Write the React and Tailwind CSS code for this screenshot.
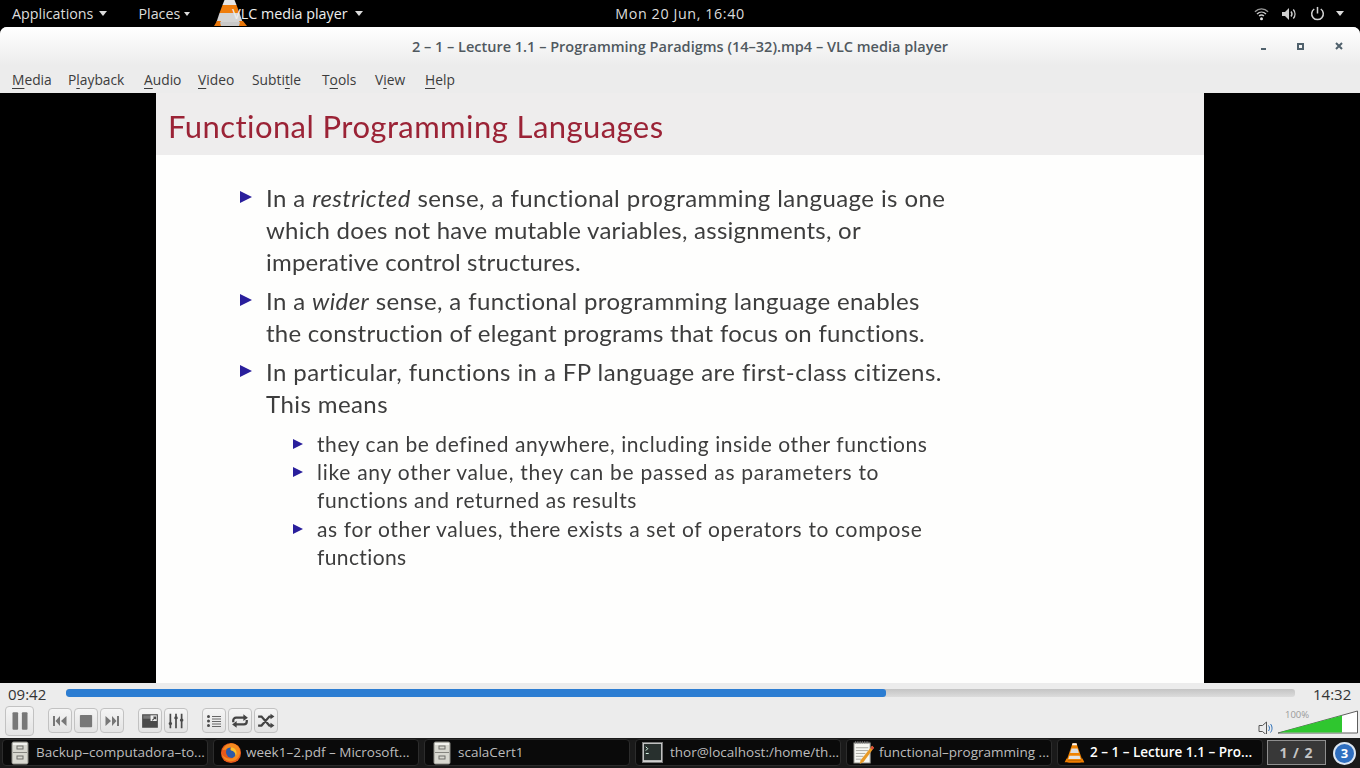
const ui = { fontFamily: '"Open Sans", "Noto Sans", sans-serif' };

function Cone({ className }) {
  return (
    <svg viewBox="0 0 32 32" className={className}>
      <path d="M13 1h6l9 26H4z" fill="#f08300" />
      <path d="M11.400 9h9.200l2 7H9.400z" fill="#dcdcdc" />
      <path d="M8.200 20h15.600l1.600 5H6.600z" fill="#e4e4e4" />
      <path d="M4 24l-3 6c0 1 30 1 30 0l-3-6-2 3H6z" fill="#ef7d00" />
      <path d="M13 1h6l1 3h-8z" fill="#f6f6f6" />
    </svg>
  );
}

function TopCone() {
  return (
    <svg viewBox="0 0 36 27" className="w-[36px] h-[27px] ml-[22px] shrink-0">
      <path d="M12.500 0h10l2 5h-14z" fill="#e6e6e6" />
      <path d="M10.500 5h14l3 8h-20z" fill="#ef7d0c" />
      <path d="M7.500 13h20l3 9h-26z" fill="#d4d4d4" />
      <path d="M5 21h4l-1 2h20l-1-2h4l4 5H2z" fill="#e8760a" />
      <path d="M8 22h20l-1 4H9z" fill="#c9c9c9" />
    </svg>
  );
}

function Cabinet() {
  return (
    <svg viewBox="0 0 18 24" className="w-[18px] h-[24px] shrink-0 ml-[2px]">
      <rect x="1" y="1" width="16" height="22" rx="1.500" fill="#d8d8d0" stroke="#8c8c86" />
      <path d="M2 11.500h14" stroke="#85857f" />
      <rect x="6" y="5" width="6" height="3" fill="none" stroke="#6f6f6a" />
      <rect x="6" y="15" width="6" height="3" fill="none" stroke="#6f6f6a" />
      <path d="M2 2h14v2H2z" fill="#f2f2ee" />
    </svg>
  );
}

function Firefox() {
  return (
    <svg viewBox="0 0 24 24" className="w-[22px] h-[22px] shrink-0 -mr-[3px]">
      <circle cx="12" cy="12" r="11" fill="#e8591a" />
      <circle cx="13" cy="11" r="6.500" fill="#2c5aa8" />
      <path d="M3 9c2-6 8-8 12-7 4 1 7 5 7 9 0 5-4 10-10 10C7 21 3 18 2 13c2 3 5 5 9 5 4 0 6-3 6-5 0-3-3-4-5-4-1 0-1-2 0-3-3 0-5 1-6 3-1-1-2 0-3 0z" fill="#f58a1f" />
      <path d="M12 6c3 0 6 2 6 6 0 1 0 2-1 3 0-3-2-5-5-6z" fill="#f9c22e" />
    </svg>
  );
}

function Term() {
  return (
    <svg viewBox="0 0 22 22" className="w-[21px] h-[21px] shrink-0">
      <rect x="0.500" y="0.500" width="21" height="21" fill="#cfcfcf" stroke="#777" />
      <rect x="2" y="2" width="18" height="17" fill="#28302e" />
      <path d="M4 5l2 2-2 2M4 12h3" stroke="#dfe" fill="none" />
    </svg>
  );
}

function Note() {
  return (
    <svg viewBox="0 0 22 26" className="w-[21px] h-[25px] shrink-0 -mr-[2px]">
      <rect x="1" y="3" width="17" height="21" fill="#f7f7f2" stroke="#8a8a84" />
      <path d="M2 2.500h15" stroke="#777" strokeWidth="2.400" strokeDasharray="1.400 1" />
      <path d="M3 8h13M3 11h13M3 14h10M3 17h8M3 20h6" stroke="#a8a8a2" />
      <path d="M20 6l2 2-11 15-4 2 1-4z" fill="#e89a26" />
      <path d="M20 6l2 2-1.600 2.200-2-2z" fill="#d94a3c" />
    </svg>
  );
}

function Btn({ wide, children }) {
  return (
    <div className={`${wide ? "w-[29px] h-[30px]" : "w-[24px] h-[25px]"} flex items-center justify-center rounded-[4px] border border-[#c2c2c2] bg-gradient-to-b from-[#f5f5f5] to-[#e3e3e3]`}>
      {children}
    </div>
  );
}

const I = ({ children, s = 16 }) => (
  <svg viewBox="0 0 16 16" style={{ width: s, height: s }} fill="#777777" stroke="none">{children}</svg>
);

const Mn = ({ children }) => <span className="underline underline-offset-[3px] decoration-1">{children}</span>;

function Caret({ className }) {
  return <span className={`inline-block w-0 h-0 border-x-[4.5px] border-x-transparent border-t-[5px] border-t-[#dcdcdc] ${className || ""}`} />;
}

function Main({ children }) {
  return (
    <div className="flex">
      <div className="w-[84px] h-[32px] relative shrink-0">
        <span className="absolute left-[84px] top-[9px] w-0 h-0 border-y-[6.5px] border-y-transparent border-l-[12px] border-l-[#2a1f9c]" />
      </div>
      <div className="pl-[26px] flex flex-col text-[24px] leading-[32px] whitespace-nowrap">{children}</div>
    </div>
  );
}

function Sub({ children }) {
  return (
    <div className="flex">
      <div className="w-[137px] h-[28px] relative shrink-0">
        <span className="absolute left-[137px] top-[9px] w-0 h-0 border-y-[5px] border-y-transparent border-l-[10px] border-l-[#2a1f9c]" />
      </div>
      <div className="pl-[24px] flex flex-col text-[21px] leading-[28px] whitespace-nowrap">{children}</div>
    </div>
  );
}

function Task({ icon, active, children }) {
  return (
    <div className={`w-[206px] h-[27px] shrink-0 flex items-center gap-[7px] px-[6px] rounded-[4px] border border-[#2c2c2c] bg-[#0a0a0a] text-[13.5px] whitespace-nowrap overflow-hidden ${active ? "text-white font-semibold" : "text-[#bdbdbd]"}`}>
      {icon}
      <span>{children}</span>
    </div>
  );
}

export default function App() {
  return (
    <div className="w-[1360px] h-[768px] overflow-hidden flex flex-col bg-black" style={ui}>
      {/* GNOME top bar */}
      <div className="h-[27px] shrink-0 bg-black text-[#dcdcdc] text-[14.3px] grid grid-cols-[1fr_auto_1fr] items-center overflow-hidden">
        <div className="flex items-center pl-[12px]">
          <span>Applications</span>
          <Caret className="ml-[6px]" />
          <span className="ml-[31px]">Places</span>
          <span className="ml-[4px] inline-block w-0 h-0 border-x-[3px] border-x-transparent border-t-[4px] border-t-[#dcdcdc]" />
          <TopCone />
          <span className="-ml-[16px] relative text-[#eeeeee]">VLC media player</span>
          <Caret className="ml-[7px]" />
        </div>
        <div className="font-medium tracking-[0.6px]">Mon 20 Jun, 16:40</div>
        <div className="flex items-center justify-end pr-[16px]">
          <svg viewBox="0 0 16 14" className="w-[15px] h-[14px]" fill="none" stroke="#cfcfcf" strokeWidth="1.500">
            <path d="M1 4.500c4-4 10-4 14 0" stroke="#999" />
            <path d="M3.200 7c2.800-2.700 6.800-2.700 9.600 0" />
            <path d="M5.400 9.200c1.500-1.400 3.700-1.400 5.200 0" />
            <circle cx="8" cy="12" r="1.600" fill="#e4e4e4" stroke="none" />
          </svg>
          <svg viewBox="0 0 16 14" className="w-[16px] h-[14px] ml-[12px]" fill="none" stroke="#cfcfcf" strokeWidth="1.400">
            <path d="M1 5h3l4-4v12L4 9H1z" fill="#cfcfcf" stroke="none" />
            <path d="M10 4.500c1.200 1.500 1.200 3.500 0 5M12.300 2.500c2.200 2.600 2.200 6.400 0 9" />
          </svg>
          <svg viewBox="0 0 16 16" className="w-[15px] h-[15px] ml-[13px]" fill="none" stroke="#d4d4d4" strokeWidth="1.600">
            <path d="M8 1v7" />
            <path d="M4.500 3.200a6.200 6.200 0 1 0 7 0" />
          </svg>
          <Caret className="ml-[11px]" />
        </div>
      </div>

      {/* Window */}
      <div className="flex-1 flex flex-col rounded-t-[7px] overflow-hidden bg-[#ececec] min-h-0">
        <div className="h-[39px] shrink-0 bg-gradient-to-b from-white to-[#ececec] flex items-center relative">
          <div className="flex-1 text-center text-[14.5px] font-semibold text-[#50595f] pt-[1px]">2 – 1 – Lecture 1.1 – Programming Paradigms (14–32).mp4 – VLC media player</div>
          <div className="absolute right-[17px] top-[15px] flex items-center gap-[31px]">
            <span className="w-[5px] h-[2px] bg-[#50616c] mt-[6px]" />
            <span className="w-[7px] h-[7px] border-2 border-[#50616c]" />
            <svg viewBox="0 0 8 8" className="w-[8px] h-[8px]"><path d="M1 1l6 6M7 1l-6 6" stroke="#50616c" strokeWidth="2" /></svg>
          </div>
        </div>
        <div className="h-[27px] shrink-0 flex items-center pl-[12px] text-[13.8px] text-[#3c3c3c] pt-[1px]">
          <span className="w-[56px]"><Mn>M</Mn>edia</span>
          <span className="w-[76px]">P<Mn>l</Mn>ayback</span>
          <span className="w-[54px]"><Mn>A</Mn>udio</span>
          <span className="w-[54px]"><Mn>V</Mn>ideo</span>
          <span className="w-[70px]">Subti<Mn>t</Mn>le</span>
          <span className="w-[53px]">T<Mn>o</Mn>ols</span>
          <span className="w-[50px]">V<Mn>i</Mn>ew</span>
          <span><Mn>H</Mn>elp</span>
        </div>

        {/* Video */}
        <div className="h-[590px] shrink-0 flex bg-black">
          <div className="w-[156px] shrink-0" />
          <div className="w-[1048px] shrink-0 bg-[#fefefd] flex flex-col text-[#3d3d3d] blur-[0.35px]" style={{ fontFamily: 'Lato, "Noto Sans", sans-serif' }}>
            <div className="h-[62px] shrink-0 bg-[#eeeded] flex items-center pl-[12px] pt-[5px] text-[31px] tracking-[0.43px] text-[#9b2336] whitespace-nowrap">Functional Programming Languages</div>
            <div className="pt-[27px] flex flex-col">
              <Main>
                <span className="tracking-[0.42px]">In a <i>restricted</i> sense, a functional programming language is one</span>
                <span className="tracking-[0.26px]">which does not have mutable variables, assignments, or</span>
                <span className="tracking-[0.19px]">imperative control structures.</span>
              </Main>
              <div className="mt-[7px]">
                <Main>
                  <span className="tracking-[0.37px]">In a <i>wider</i> sense, a functional programming language enables</span>
                  <span className="tracking-[0.26px]">the construction of elegant programs that focus on functions.</span>
                </Main>
              </div>
              <div className="mt-[7px]">
                <Main>
                  <span className="tracking-[0.42px]">In particular, functions in a FP language are first-class citizens.</span>
                  <span className="tracking-[0.42px]">This means</span>
                </Main>
              </div>
              <div className="mt-[10px] flex flex-col">
                <Sub><span className="tracking-[0.57px]">they can be defined anywhere, including inside other functions</span></Sub>
                <Sub>
                  <span className="tracking-[0.73px]">like any other value, they can be passed as parameters to</span>
                  <span className="tracking-[0.56px]">functions and returned as results</span>
                </Sub>
                <div className="mt-px">
                  <Sub>
                    <span className="tracking-[0.65px]">as for other values, there exists a set of operators to compose</span>
                    <span className="tracking-[0.38px]">functions</span>
                  </Sub>
                </div>
              </div>
            </div>
          </div>
          <div className="flex-1" />
        </div>

        {/* Controls */}
        <div className="h-[55px] shrink-0 flex flex-col bg-[#ececec]">
          <div className="h-[22px] flex items-center text-[15px] text-[#333] pl-[8px] pr-[8px] pt-[1px]">
            <span className="w-[58px]">09:42</span>
            <div className="w-[1229px] h-[8px] -mt-[3px] rounded-[3px] bg-gradient-to-b from-[#c4c4c4] to-[#dcdcdc] overflow-hidden">
              <div className="h-full w-[820px] bg-[#2c7dd2] rounded-[3px]" />
            </div>
            <span className="ml-[18px]">14:32</span>
          </div>
          <div className="flex-1 flex items-start pl-[5px] pt-[1px] relative">
            <Btn wide>
              <I s={20}><rect x="2" y="1" width="4.500" height="14" rx="0.800" /><rect x="9.500" y="1" width="4.500" height="14" rx="0.800" /></I>
            </Btn>
            <div className="flex gap-[2px] ml-[14px] mt-[2px]">
              <Btn><I><path d="M1 3h2v10H1zM8 3v10L3.500 8zM14.500 3v10L9 8z" /></I></Btn>
              <Btn><I s={14}><rect x="1" y="1" width="14" height="14" rx="1" /></I></Btn>
              <Btn><I><path d="M13 3h2v10h-2zM8 3v10l4.500-5zM1.500 3v10L7 8z" /></I></Btn>
            </div>
            <div className="flex gap-[2px] ml-[14px] mt-[2px]">
              <Btn>
                <I s={18}><rect x="1" y="2" width="14" height="12" fill="#4a4a4a" /><rect x="2" y="3" width="12" height="3" fill="#777" /><rect x="8.500" y="3" width="5.500" height="5" fill="#eee" /><path d="M10 7.500l3-3M11 4.500h2v2" stroke="#4a4a4a" fill="none" /></I>
              </Btn>
              <Btn>
                <I s={18}><path d="M3 1.500v13M8 1.500v13M13 1.500v13" stroke="#4a4a4a" strokeWidth="1.500" /><rect x="1.500" y="9" width="3" height="2.500" rx="1" fill="#4a4a4a" /><rect x="6.500" y="4" width="3" height="2.500" rx="1" fill="#4a4a4a" /><rect x="11.500" y="6" width="3" height="2.500" rx="1" fill="#4a4a4a" /></I>
              </Btn>
            </div>
            <div className="flex gap-[2px] ml-[14px] mt-[2px]">
              <Btn>
                <I s={16}><circle cx="2.500" cy="3.500" r="1.500" fill="#4a4a4a" /><circle cx="2.500" cy="8" r="1.500" fill="#4a4a4a" /><circle cx="2.500" cy="12.500" r="1.500" fill="#4a4a4a" /><path d="M6 3.500h9M6 6h9M6 8.500h9M6 11h9M6 13.500h9" stroke="#666" strokeWidth="1" /></I>
              </Btn>
              <Btn>
                <I s={18}><path d="M13 5H4.500a2.500 2.500 0 0 0-2.500 2.500V9M3 11h8.500a2.500 2.500 0 0 0 2.500-2.500V7" fill="none" stroke="#444" strokeWidth="2" /><path d="M11 2l4 3-4 3zM5 8l-4 3 4 3z" fill="#444" /></I>
              </Btn>
              <Btn>
                <I s={18}><path d="M1 4h3l7 8h2M1 12h3l7-8h2" fill="none" stroke="#444" strokeWidth="2" /><path d="M12 1.500l3.500 2.500-3.500 2.500zM12 9.500l3.500 2.500-3.500 2.500z" fill="#444" /></I>
              </Btn>
            </div>
            <div className="absolute right-[2px] top-0 w-[100px] h-[29px]">
              <svg viewBox="0 0 100 29" className="w-[100px] h-[29px]">
                <path d="M20 28L99.500 6v22z" fill="#fff" stroke="#5e5e5e" strokeWidth="1" />
                <path d="M21 27.500L84 10.600V27.500z" fill="#2fc62f" />
                <path d="M1 20.500h3.500l4-3.500v13l-4-3.500H1z" fill="none" stroke="#555" />
                <path d="M10.500 20.500c1.300 1.500 1.300 4 0 5.500M12.500 19c2 2.300 2 6.200 0 8.500" fill="none" stroke="#2c6fb8" />
              </svg>
              <span className="absolute left-[27px] top-[5px] text-[9.5px] leading-none text-[#9a9a9a]">100%</span>
            </div>
          </div>
        </div>

        {/* Taskbar */}
        <div className="h-[30px] shrink-0 bg-[#1a1a1a] flex items-center pl-[2px] pb-px gap-[5px]">
          <Task icon={<Cabinet />}>Backup–computadora–to...</Task>
          <Task icon={<Firefox />}>week1–2.pdf – Microsoft...</Task>
          <Task icon={<Cabinet />}>scalaCert1</Task>
          <Task icon={<Term />}>thor@localhost:/home/th...</Task>
          <Task icon={<Note />}>functional–programming ...</Task>
          <Task active icon={<Cone className="w-[21px] h-[24px] shrink-0 -mr-[2px]" />}>2 – 1 – Lecture 1.1 – Pro...</Task>
          <div className="w-[59px] h-[25px] shrink-0 -ml-px flex items-center justify-center border border-[#8f8f8f] bg-[#383838] text-[#c4c4c4] text-[14px] font-bold tracking-[1px]">1 / 2</div>
          <div className="w-[23px] h-[23px] ml-[2px] mt-[2px] shrink-0 rounded-full border-2 border-[#dce6f2] bg-[#2f6fc0] flex items-center justify-center text-white text-[13px] font-bold">3</div>
        </div>
      </div>
    </div>
  );
}
